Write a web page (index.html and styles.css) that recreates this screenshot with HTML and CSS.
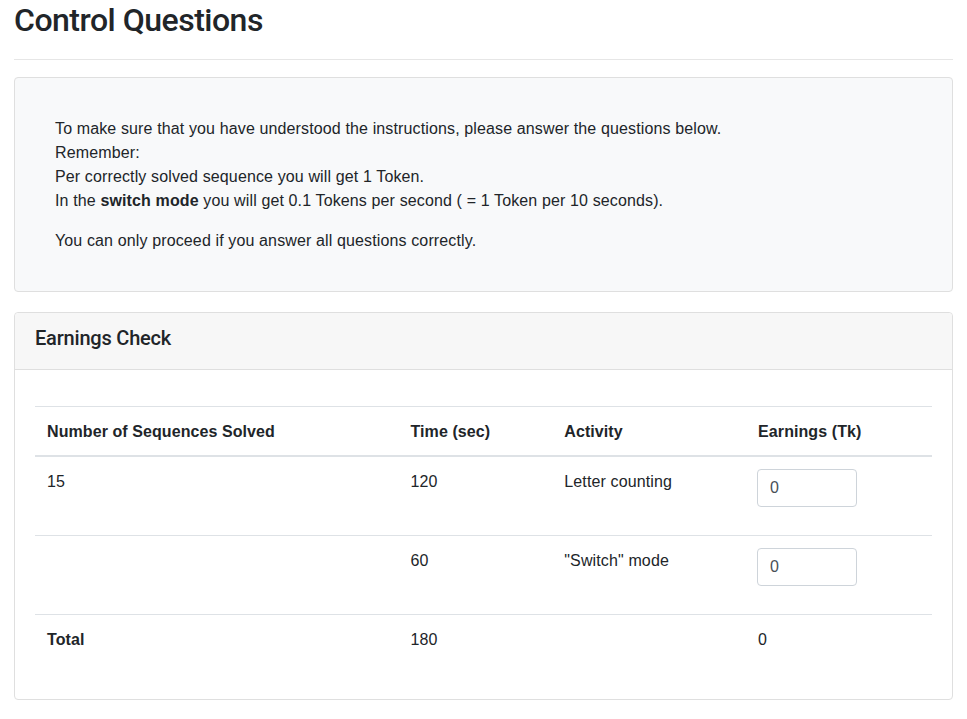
FILE: index.html
```html
<!DOCTYPE html>
<html lang="en">
<head>
<meta charset="utf-8">
<title>Control Questions</title>
<link rel="stylesheet" href="styles.css">
</head>
<body>
<div class="container">
  <div class="page-header">
    <h2 class="page-title">Control Questions</h2>
  </div>

  <div class="card card-info">
    <div class="info-body">
      <p class="info-text">To make sure that you have understood the instructions, please answer the questions below.<br>
      Remember:<br>
      Per correctly solved sequence you will get 1 Token.<br>
      In the <b>switch mode</b> you will get 0.1 Tokens per second ( = 1 Token per 10 seconds).</p>
      <p class="info-text last">You can only proceed if you answer all questions correctly.</p>
    </div>
  </div>

  <div class="card card-check">
    <div class="card-header">
      <h5 class="card-title">Earnings Check</h5>
    </div>
    <div class="card-body">
      <table class="table">
        <colgroup>
          <col class="c1"><col class="c2"><col class="c3"><col class="c4">
        </colgroup>
        <thead>
          <tr>
            <th>Number of Sequences Solved</th>
            <th>Time (sec)</th>
            <th>Activity</th>
            <th>Earnings (Tk)</th>
          </tr>
        </thead>
        <tbody>
          <tr>
            <td>15</td>
            <td>120</td>
            <td>Letter counting</td>
            <td><div class="form-group"><input class="form-control" type="text" value="0"></div></td>
          </tr>
          <tr>
            <td></td>
            <td>60</td>
            <td>"Switch" mode</td>
            <td><div class="form-group"><input class="form-control" type="text" value="0"></div></td>
          </tr>
          <tr>
            <td><b>Total</b></td>
            <td>180</td>
            <td></td>
            <td>0</td>
          </tr>
        </tbody>
      </table>
    </div>
  </div>
</div>
</body>
</html>
```

FILE: styles.css
```css
* { box-sizing: border-box; }

html, body {
  margin: 0;
  padding: 0;
  background: #fff;
}

body {
  font-family: "Liberation Sans", Arial, Helvetica, sans-serif;
  font-size: 16px;
  line-height: 1.5;
  color: #212529;
  letter-spacing: 0.13px;
}

.container {
  padding: 0 14px;
}

.page-header {
  height: 60px;
  border-bottom: 1px solid #e6e6e6;
  margin-bottom: 17px;
}

.page-title {
  margin: 0;
  padding-top: 1px;
  font-family: Roboto, "Liberation Sans", Arial, sans-serif;
  font-size: 32px;
  font-weight: 500;
  line-height: 1.2;
  letter-spacing: -0.5px;
}

.card {
  border: 1px solid #dfdfdf;
  border-radius: 4px;
  background: #fff;
}

.card-info {
  background: #f8f9fa;
  margin-bottom: 20px;
}

.info-body {
  padding: 39px 40px 38px 40px;
}

.info-text {
  margin: 0 0 16px 0;
}

.info-text.last {
  margin-bottom: 0;
}

.card-check {
  margin-bottom: 20px;
}

.card-header {
  background: #f7f7f7;
  border-bottom: 1px solid #dfdfdf;
  padding: 13px 20px 11px 20px;
  border-radius: 4px 4px 0 0;
}

.card-title {
  margin: 0 0 8px 0;
  font-family: Roboto, "Liberation Sans", Arial, sans-serif;
  font-size: 20px;
  font-weight: 500;
  line-height: 1.2;
  letter-spacing: -0.2px;
}

.card-body {
  padding: 20px;
}

.table {
  width: 100%;
  border-collapse: collapse;
  margin-top: 16px;
  margin-bottom: 16px;
}

.c1 { width: 364px; }
.c2 { width: 154px; }
.c3 { width: 194px; }
.c4 { width: 186px; }

.table th,
.table td {
  padding: 13px 12px 11px 12px;
  vertical-align: top;
  text-align: left;
  border-top: 1px solid #dee2e6;
}

.table th {
  font-weight: 700;
  letter-spacing: 0.08px;
}

.table thead th {
  border-bottom: 2px solid #dee2e6;
}

.form-group {
  margin: -1px 0 17px 0;
}

.form-control {
  display: block;
  width: 100px;
  height: 38px;
  padding: 6px 12px;
  font-family: inherit;
  font-size: 16px;
  line-height: 1.5;
  color: #495057;
  background: #fff;
  border: 1px solid #ced4da;
  border-radius: 4px;
  margin-left: -1px;
}
```
